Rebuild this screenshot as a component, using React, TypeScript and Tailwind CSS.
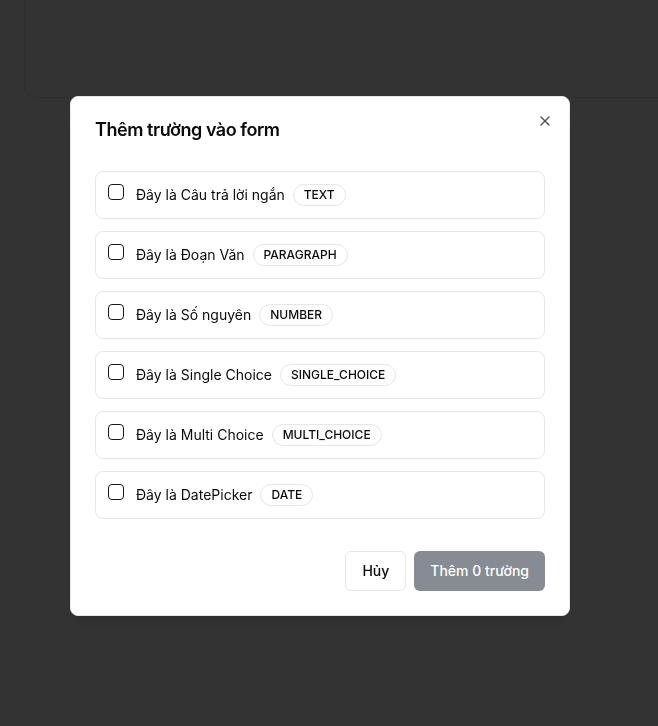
import React, { useState } from 'react';
import { X } from 'lucide-react';

const FIELDS = [
  { label: 'Đây là Câu trả lời ngắn', type: 'TEXT' },
  { label: 'Đây là Đoạn Văn', type: 'PARAGRAPH' },
  { label: 'Đây là Số nguyên', type: 'NUMBER' },
  { label: 'Đây là Single Choice', type: 'SINGLE_CHOICE' },
  { label: 'Đây là Multi Choice', type: 'MULTI_CHOICE' },
  { label: 'Đây là DatePicker', type: 'DATE' },
];

const App = () => {
  const [selected, setSelected] = useState<string[]>([]);

  const toggle = (type: string) => {
    setSelected((prev) => (prev.includes(type) ? prev.filter((t) => t !== type) : [...prev, type]));
  };

  return (
    <div className="min-h-screen bg-white font-['Inter','Liberation_Sans',sans-serif] text-[#0a0a0a]">
      {/* Page behind the dialog */}
      <div className="pl-6">
        <div className="h-[98px] rounded-bl-xl border-b border-l border-gray-200 bg-white"></div>
      </div>

      {/* Overlay */}
      <div className="fixed inset-0 bg-black/80"></div>

      {/* Dialog */}
      <div className="fixed left-[70px] top-[96px] w-[500px] rounded-lg border border-gray-200 bg-white p-6 shadow-lg">
        <button className="absolute right-4 top-4 text-[#0a0a0a] opacity-70">
          <X size={16} strokeWidth={2} />
        </button>
        <h2 className="text-lg font-semibold leading-none tracking-tight">Thêm trường vào form</h2>

        <div className="mt-8 flex flex-col gap-3">
          {FIELDS.map((f) => (
            <label
              key={f.type}
              className="flex cursor-pointer items-start gap-3 rounded-lg border border-gray-200 p-3"
            >
              <input
                type="checkbox"
                checked={selected.includes(f.type)}
                onChange={() => toggle(f.type)}
                className="mt-0 h-4 w-4 appearance-none rounded-[4px] border-[1.5px] border-[#18181b] bg-white"
              />
              <div className="flex h-[22px] items-center gap-2">
                <span className="text-sm leading-5">{f.label}</span>
                <span className="rounded-full border border-gray-200 px-2.5 py-0.5 text-xs font-medium leading-4">
                  {f.type}
                </span>
              </div>
            </label>
          ))}
        </div>

        <div className="mt-8 flex justify-end gap-2">
          <button className="h-10 rounded-md border border-gray-200 bg-white px-4 text-sm font-medium">
            Hủy
          </button>
          <button
            disabled={selected.length === 0}
            className="h-10 rounded-md bg-gray-900 px-4 text-sm font-medium text-white disabled:opacity-50"
          >
            Thêm {selected.length} trường
          </button>
        </div>
      </div>
    </div>
  );
};

export default App;
